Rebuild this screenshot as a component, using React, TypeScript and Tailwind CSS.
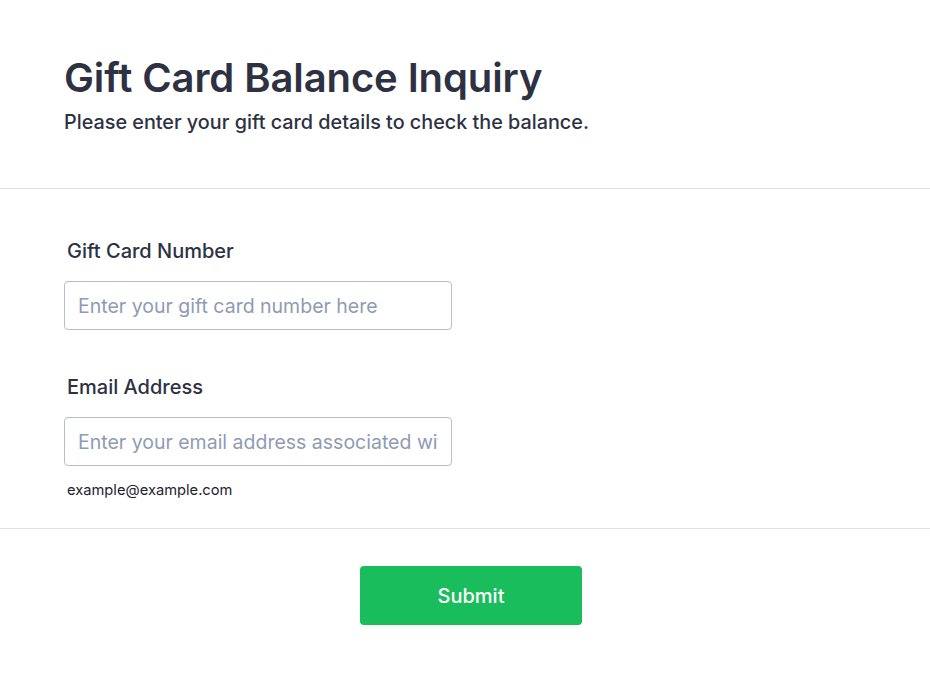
import React from "react";

export default function App() {
  return (
    <div className="min-h-screen bg-white text-[#2d3142]" style={{ fontFamily: "Inter, 'Noto Sans', sans-serif" }}>
      <header className="pl-16 pt-[54px] pb-[54px] border-b border-[#e0e0ec]">
        <h1 className="text-[40px] leading-[48px] font-semibold text-[#2d3142] tracking-[-0.1px]">Gift Card Balance Inquiry</h1>
        <p className="mt-[8px] text-[19.8px] leading-[24px] font-medium text-[#2d3142]">Please enter your gift card details to check the balance.</p>
      </header>
      <main className="pl-16 pt-[50px] pb-[29px] border-b border-[#e0e0ec]">
        <div className="flex flex-col">
          <label className="pl-[3px] text-[20px] leading-[24px] font-medium text-[#2d3142]">Gift Card Number</label>
          <input
            type="text"
            placeholder="Enter your gift card number here"
            className="mt-[18px] w-[388px] h-[49px] px-[13px] border border-[#b9bccb] rounded-[4px] text-[19.5px] placeholder:text-[#8f9bb3] outline-none"
          />
        </div>
        <div className="flex flex-col mt-[45px]">
          <label className="pl-[3px] text-[20px] leading-[24px] font-medium text-[#2d3142]">Email Address</label>
          <input
            type="email"
            placeholder="Enter your email address associated with the gift card"
            className="mt-[18px] w-[388px] h-[49px] px-[13px] border border-[#b9bccb] rounded-[4px] text-[19.5px] placeholder:text-[#8f9bb3] outline-none"
          />
          <span className="mt-[15px] pl-[3px] text-[14.7px] leading-[18px] text-[#1f2230]">example@example.com</span>
        </div>
      </main>
      <div className="flex justify-center pt-[37px] pl-[12px]">
        <button className="w-[222px] h-[59px] bg-[#1abd5c] rounded-[4px] text-white text-[20px] font-medium">Submit</button>
      </div>
    </div>
  );
}
